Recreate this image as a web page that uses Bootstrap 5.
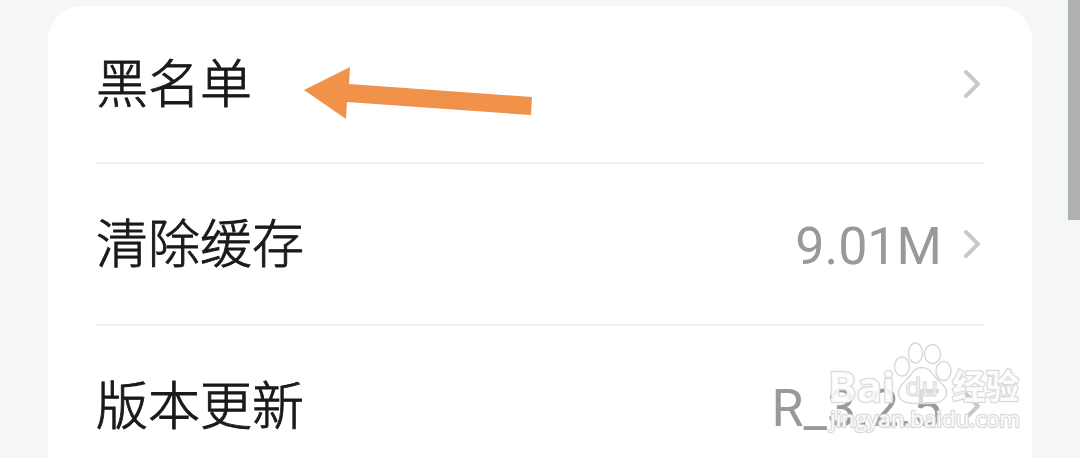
<!DOCTYPE html>
<html lang="zh-CN">
<head>
    <meta charset="UTF-8">
    <meta name="viewport" content="width=device-width, initial-scale=1.0">
    <title>设置</title>
    <link href="https://cdn.jsdelivr.net/npm/bootstrap@5.3.0/dist/css/bootstrap.min.css" rel="stylesheet">
    <style>
        body {
            height: 458px;
            background: #f5f6f8;
            font-family: Roboto, "Noto Sans CJK SC", sans-serif;
            font-size: 52px;
            line-height: 1;
        }
        .settings-card {
            width: 984px;
            height: 452px;
            margin: 6px 0 0 48px;
            padding: 0 47px 0 48px;
            border-radius: 34px 34px 0 0;
        }
        .settings-item {
            height: 162px;
            border-bottom: 2px solid #f1f1f1;
        }
        .settings-item:first-child {
            height: 158px;
        }
        .settings-item:last-child {
            height: 132px;
            padding-top: 28px;
            border-bottom: 0;
        }
        .item-label {
            color: #1a1a1a;
            font-family: "Noto Sans CJK SC", sans-serif;
            font-weight: 300;
            -webkit-text-stroke: .9px #1a1a1a;
            padding-bottom: 6px;
        }
        .item-value {
            color: #999;
            margin-right: 20px;
            padding-top: 5px;
        }
        .chevron {
            width: 20px;
            height: 32px;
            margin-right: 3px;
        }
        .scroll-thumb {
            width: 12px;
            height: 220px;
            background: #aeb2b3;
        }
        .pointer-arrow {
            left: 300px;
            top: 60px;
        }
        .watermark {
            left: 820px;
            top: 336px;
        }
    </style>
</head>
<body class="overflow-hidden position-relative">
    <div class="d-flex justify-content-between align-items-start">
        <!-- Settings list -->
        <div class="settings-card bg-white">
            <div class="settings-item d-flex align-items-center">
                <span class="item-label me-auto">黑名单</span>
                <svg class="chevron" viewBox="0 0 20 32" fill="none" stroke="#c9c9c9" stroke-width="4" stroke-linecap="round" stroke-linejoin="round"><path d="M4 4L16 16L4 28"/></svg>
            </div>
            <div class="settings-item d-flex align-items-center">
                <span class="item-label me-auto">清除缓存</span>
                <span class="item-value">9.01M</span>
                <svg class="chevron" viewBox="0 0 20 32" fill="none" stroke="#c9c9c9" stroke-width="4" stroke-linecap="round" stroke-linejoin="round"><path d="M4 4L16 16L4 28"/></svg>
            </div>
            <div class="settings-item d-flex align-items-center">
                <span class="item-label me-auto">版本更新</span>
                <span class="item-value">R_3.2.5</span>
                <svg class="chevron" viewBox="0 0 20 32" fill="none" stroke="#c9c9c9" stroke-width="4" stroke-linecap="round" stroke-linejoin="round"><path d="M4 4L16 16L4 28"/></svg>
            </div>
        </div>
        <!-- Scrollbar -->
        <div class="scroll-thumb"></div>
    </div>

    <!-- Arrow pointing at the first item -->
    <svg class="pointer-arrow position-absolute" width="240" height="64" viewBox="300 60 240 64">
        <path d="M304 90L350 67L349 84L532 97L531 115L347 102L346 119Z" fill="#f1924b"/>
    </svg>

    <!-- Watermark -->
    <svg class="watermark position-absolute" width="210" height="106" viewBox="820 336 210 106">
        <g fill="#fff" fill-opacity=".65" stroke="#dadada" stroke-width="1.5" stroke-linejoin="round">
            <ellipse cx="902" cy="366.5" rx="7.5" ry="9.5"/>
            <ellipse cx="915.5" cy="353" rx="7" ry="10"/>
            <ellipse cx="932.5" cy="354" rx="8" ry="9.5"/>
            <ellipse cx="943.5" cy="371" rx="7.5" ry="9.5"/>
            <path d="M922 367.5C931 367.500 933 376 939 381C945 386 948 391 946 396C943 402 937 404 922 403.500C907 404 901 402 899 396C897 389 902 384 907 379C912 374 914 367.500 922 367.500Z"/>
            <g font-family="Open Sans, sans-serif" font-weight="700" fill-opacity=".85" paint-order="stroke" stroke-width="2.4">
                <text x="828" y="402" font-size="42" textLength="67" lengthAdjust="spacingAndGlyphs">Bai</text>
                <text x="905" y="396" font-size="25" textLength="33" lengthAdjust="spacingAndGlyphs" font-weight="400" fill-opacity=".4" stroke-width="1.5">du</text>
                <text x="952" y="399" font-size="34" textLength="67" lengthAdjust="spacingAndGlyphs" font-family="Noto Sans CJK SC, sans-serif" fill-opacity=".9">经验</text>
                <text x="830" y="427" font-size="22" textLength="190" lengthAdjust="spacingAndGlyphs" font-weight="400" fill-opacity=".9" stroke-width="2.4">jingyan.baidu.com</text>
            </g>
        </g>
    </svg>
    <script src="https://cdn.jsdelivr.net/npm/bootstrap@5.3.0/dist/js/bootstrap.bundle.min.js"></script>
</body>
</html>
